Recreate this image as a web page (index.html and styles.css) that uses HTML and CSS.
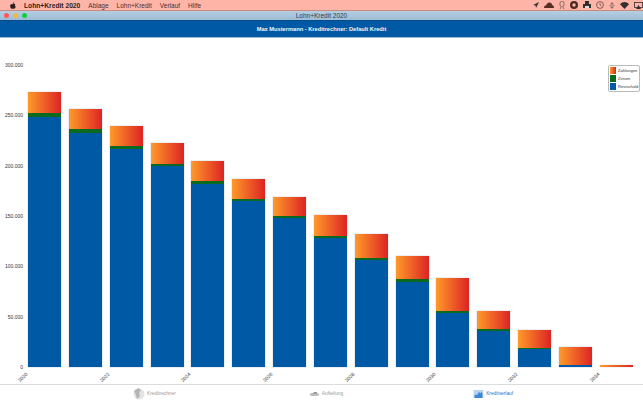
FILE: index.html
```html
<!DOCTYPE html>
<html lang="de">
<head>
  <meta charset="UTF-8" />
  <meta name="viewport" content="width=device-width, initial-scale=1.0" />
  <title>Lohn+Kredit 2020</title>
  <link rel="stylesheet" href="styles.css">
</head>
<body>
  <div class="menubar">
    <svg class="apple" viewBox="0 0 12 14"><path d="M8.2 0.4c.1 1-.3 1.8-.8 2.4-.6.6-1.3 1-2 .9-.1-.9.3-1.800.8-2.300.5-.6 1.300-1 2-1zM10.800 4.800c-1.300.8-1.300 2.700-.1 3.700.3.300.7.500 1 .6-.7 2-2 4.500-3.400 4.500-.9 0-1.200-.6-2.300-.6s-1.500.6-2.300.6C2 13.600.3 10.500.3 7.800c0-2.600 1.600-4 3.100-4 1 0 1.800.7 2.400.7s1.500-.8 2.700-.8c.9 0 1.700.4 2.300 1.100z"/></svg>
    <span class="menu-app">Lohn+Kredit 2020</span>
    <span class="menu-item">Ablage</span>
    <span class="menu-item">Lohn+Kredit</span>
    <span class="menu-item">Verlauf</span>
    <span class="menu-item">Hilfe</span>
    <div class="status">
      <svg width="6" height="6" viewBox="0 0 6 6"><path d="M6 0 0 3l2.500.6L3 6z" fill="#333"/></svg>
      <svg width="10" height="6" viewBox="0 0 10 6"><path d="M0 6c0-2 1-2.500 2-2.500C3 1 4.500 0 6 .5c1.500.3 2 1.500 2.200 2.500C9.500 3.300 10 4.500 10 6z" fill="#5a2d22"/></svg>
      <svg width="6" height="8" viewBox="0 0 6 8"><rect x="1" y=".5" width="4" height="5" rx="1.500" fill="none" stroke="#8a6a62"/><path d="M1 8l1-2M5 8 4 6" stroke="#8a6a62"/></svg>
      <svg width="8" height="8" viewBox="0 0 8 8"><circle cx="4" cy="4" r="4" fill="#4a2a24"/><circle cx="4" cy="4" r="1.700" fill="#ffb5a8"/></svg>
      <svg width="8" height="8" viewBox="0 0 8 8"><path d="M2 0h4v3h2v4H0V3h2z" fill="#33302f"/><rect x="2" y="5" width="4" height="2" fill="#ddd"/></svg>
      <svg width="8" height="8" viewBox="0 0 8 8"><circle cx="4" cy="4" r="3.400" fill="none" stroke="#5b4a46" stroke-width=".8"/><path d="M4 2v2l1.500 1" fill="none" stroke="#5b4a46" stroke-width=".7"/></svg>
      <svg width="6" height="7" viewBox="0 0 6 7"><path d="M3 0 5 2.500H1zM3 7 1 4.500h4zM0 3.300h6v.4H0z" fill="#8a6a62"/></svg>
      <svg width="9" height="7" viewBox="0 0 9 7"><path d="M4.500 7 0 2.200C2.500-.7 6.500-.7 9 2.200z" fill="#33302f"/></svg>
      <svg width="9" height="7" viewBox="0 0 9 7"><rect x=".4" y=".4" width="8.200" height="5" fill="none" stroke="#33302f" stroke-width=".8"/><path d="M4.500 3 7 7H2z" fill="#33302f"/></svg>
    </div>
  </div>

  <div class="titlebar">
    <div class="lights">
      <span class="light red"></span>
      <span class="light yellow"></span>
      <span class="light green"></span>
    </div>
    <span class="window-title">Lohn+Kredit 2020</span>
  </div>

  <div class="header">Max Mustermann - Kreditrechner: Default Kredit</div>

  <div class="chart">
    <div class="y-axis">
      <span>300.000</span>
      <span>250.000</span>
      <span>200.000</span>
      <span>150.000</span>
      <span>100.000</span>
      <span>50.000</span>
      <span>0</span>
    </div>
    <div class="plot">
      <div class="bars">
        <div class="bar"><div class="pay" style="height:21px"></div><div class="zins" style="height:4px"></div><div class="rest" style="height:250px"></div></div>
        <div class="bar"><div class="pay" style="height:20px"></div><div class="zins" style="height:4px"></div><div class="rest" style="height:234px"></div></div>
        <div class="bar"><div class="pay" style="height:20px"></div><div class="zins" style="height:3px"></div><div class="rest" style="height:218px"></div></div>
        <div class="bar"><div class="pay" style="height:21px"></div><div class="zins" style="height:2px"></div><div class="rest" style="height:201px"></div></div>
        <div class="bar"><div class="pay" style="height:20px"></div><div class="zins" style="height:3px"></div><div class="rest" style="height:183px"></div></div>
        <div class="bar"><div class="pay" style="height:20px"></div><div class="zins" style="height:2px"></div><div class="rest" style="height:166px"></div></div>
        <div class="bar"><div class="pay" style="height:19px"></div><div class="zins" style="height:2px"></div><div class="rest" style="height:149px"></div></div>
        <div class="bar"><div class="pay" style="height:21px"></div><div class="zins" style="height:2px"></div><div class="rest" style="height:129px"></div></div>
        <div class="bar"><div class="pay" style="height:24px"></div><div class="zins" style="height:2px"></div><div class="rest" style="height:107px"></div></div>
        <div class="bar"><div class="pay" style="height:23px"></div><div class="zins" style="height:3px"></div><div class="rest" style="height:85px"></div></div>
        <div class="bar"><div class="pay" style="height:33px"></div><div class="zins" style="height:2px"></div><div class="rest" style="height:54px"></div></div>
        <div class="bar"><div class="pay" style="height:18px"></div><div class="zins" style="height:2px"></div><div class="rest" style="height:36px"></div></div>
        <div class="bar"><div class="pay" style="height:18px"></div><div class="zins" style="height:1px"></div><div class="rest" style="height:18px"></div></div>
        <div class="bar"><div class="pay" style="height:18px"></div><div class="rest" style="height:2px"></div></div>
        <div class="bar"><div class="pay" style="height:2px"></div></div>
      </div>
      <div class="x-axis">
        <span>2020</span><span></span>
        <span>2022</span><span></span>
        <span>2024</span><span></span>
        <span>2026</span><span></span>
        <span>2028</span><span></span>
        <span>2030</span><span></span>
        <span>2032</span><span></span>
        <span>2034</span>
      </div>
    </div>
    <div class="legend">
      <div class="legend-row"><i class="swatch pay"></i>Zahlungen</div>
      <div class="legend-row"><i class="swatch zins"></i>Zinsen</div>
      <div class="legend-row"><i class="swatch rest"></i>Restschuld</div>
    </div>
  </div>

  <div class="tabs">
    <div class="tab tab-rechner">
      <svg width="12" height="12" viewBox="0 0 12 12"><circle cx="6" cy="6" r="5.500" fill="#e4e4e4"/><path d="M1 3 5 0l3 2-2 3 1 3-3 3-1-4z" fill="#b4b4b4"/></svg>
      Kreditrechner
    </div>
    <div class="tab tab-aufteilung">
      <svg width="11" height="4" viewBox="0 0 12 5"><ellipse cx="6" cy="3" rx="6" ry="2" fill="#bdbdbd"/><path d="M3 2 6 0h3v2z" fill="#8f8f8f"/></svg>
      Aufteilung
    </div>
    <div class="tab tab-verlauf active">
      <svg width="11" height="8" viewBox="0 0 11 9"><rect width="11" height="9" fill="#b9d4f2"/><path d="M1 9V6l2-1 1 1 2-4 1.500 2L9 2l1 3v4z" fill="#3f86d8"/></svg>
      Kreditverlauf
    </div>
  </div>
</body>
</html>
```

FILE: styles.css
```css
* {
  box-sizing: border-box;
}
body {
  margin: 0;
  width: 643px;
  height: 402px;
  overflow: hidden;
  display: flex;
  flex-direction: column;
  background: #fff;
  font-family: "Liberation Sans", Arial, sans-serif;
}

/* mac menu bar */
.menubar {
  height: 10px;
  flex: none;
  display: flex;
  align-items: center;
  background: #ffb4a8;
  color: #4d2f2a;
  font-size: 6.500px;
  padding-left: 10px;
}
.apple {
  width: 6px;
  height: 7px;
  fill: #2a1f1d;
  margin-right: 8px;
}
.menu-app {
  font-weight: bold;
  font-size: 6.700px;
  color: #2f1d1a;
  margin-right: 8px;
}
.menu-item {
  margin-right: 8px;
}
.status {
  margin-left: auto;
  display: flex;
  align-items: center;
  gap: 5px;
}

/* window title */
.titlebar {
  height: 10px;
  flex: none;
  position: relative;
  display: flex;
  align-items: center;
  justify-content: center;
  background: linear-gradient(#b5cfe2, #9dbcd5);
  border-top: 1px solid #c98b80;
  color: #2c3e50;
  font-size: 6.500px;
}
.lights {
  position: absolute;
  left: 4px;
  top: 2px;
  display: flex;
  gap: 4px;
}
.light {
  width: 5px;
  height: 5px;
  border-radius: 50%;
}
.red { background: #fc5b57; }
.yellow { background: #f4b93c; }
.green { background: #15cc40; }

.header {
  height: 18px;
  flex: none;
  background: #0059a5;
  border-top: 1px solid #0a4c85;
  border-bottom: 1px solid #9db8d2;
  color: #f2f6fa;
  font-size: 5.700px;
  font-weight: bold;
  text-align: center;
  line-height: 16px;
}

/* chart */
.chart {
  flex: 1;
  position: relative;
  display: flex;
  padding: 24px 10px 0 0;
}
.y-axis {
  width: 28px;
  height: 308px;
  flex: none;
  display: flex;
  flex-direction: column;
  justify-content: space-between;
  align-items: flex-end;
  padding-right: 5px;
  font-size: 5px;
  color: #333;
}
.plot {
  flex: 1;
  padding-top: 3px;
}
.bars {
  height: 302px;
  display: flex;
  align-items: flex-end;
  gap: 7.850px;
}
.bar {
  width: 33px;
  flex: none;
  display: flex;
  flex-direction: column;
  box-shadow: 0 0 1px #8a9bb0;
}
.pay {
  background: linear-gradient(90deg, #ff9a2a, #dc2424);
}
.zins {
  background: #0b6a1f;
}
.rest {
  background: #0059a5;
}
.x-axis {
  display: flex;
  gap: 7.850px;
  margin-top: 4px;
  font-size: 5px;
  color: #333;
}
.x-axis span {
  width: 33px;
  flex: none;
  height: 12px;
  line-height: 12px;
}
.x-axis span:not(:empty) {
  transform: translateX(-22px) rotate(-45deg);
  text-align: center;
}

.legend {
  position: absolute;
  left: 608px;
  top: 27px;
  width: 32px;
  height: 27px;
  background: #fff;
  border: 1px solid #bbb;
  border-radius: 2px;
  padding: 1px;
  display: flex;
  flex-direction: column;
  gap: 1px;
  font-size: 4.100px;
  color: #333;
}
.legend-row {
  display: flex;
  align-items: center;
  gap: 2px;
  height: 7px;
}
.swatch {
  width: 6px;
  height: 7px;
  flex: none;
}

/* bottom tabs */
.tabs {
  height: 18px;
  flex: none;
  border-top: 1px solid #dcdcdc;
  display: flex;
  align-items: center;
  font-size: 4.800px;
  color: #9a9a9a;
}
.tab {
  display: flex;
  align-items: center;
  gap: 2px;
}
.tab-rechner { margin-left: 133px; }
.tab-aufteilung { margin-left: 133px; }
.tab-verlauf { margin-left: 130px; }
.active {
  color: #1f6fc9;
}
```
